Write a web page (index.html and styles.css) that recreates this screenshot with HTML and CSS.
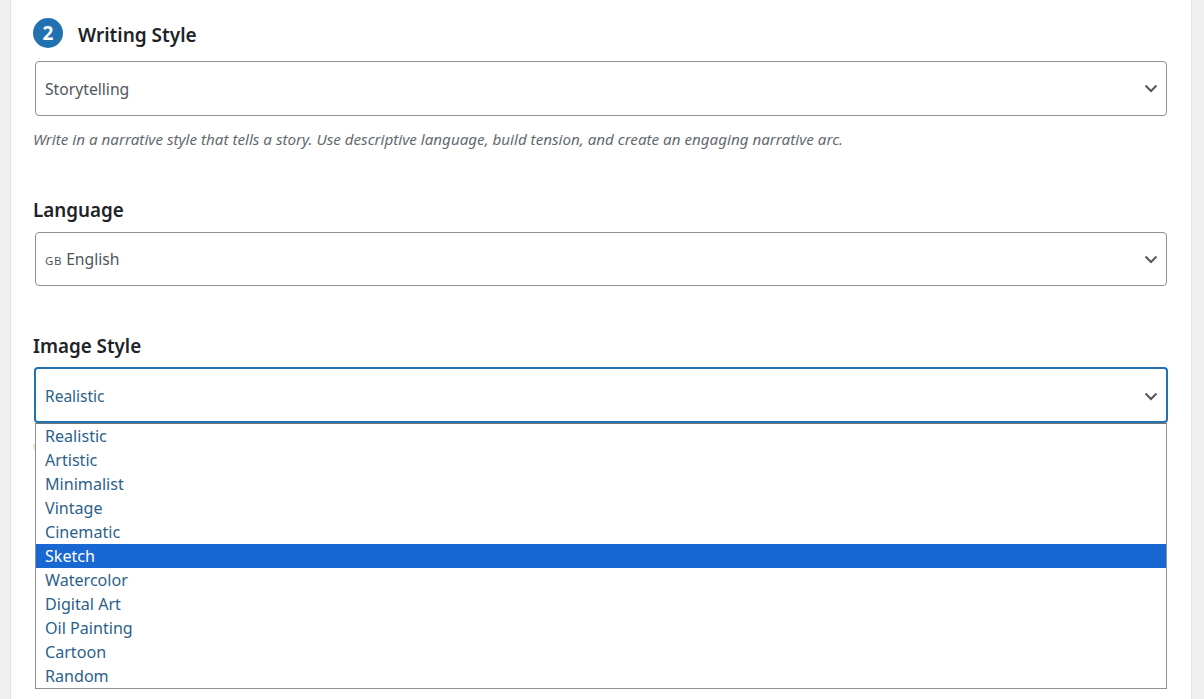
FILE: index.html
```html
<!DOCTYPE html>
<html lang="en">
<head>
<meta charset="utf-8">
<title>Writing settings</title>
<link rel="stylesheet" href="styles.css">
</head>
<body>
<main class="card">
  <section class="field field-writing">
    <h2 class="step-title"><span class="step-badge">2</span>Writing Style</h2>
    <div class="select">
      <span>Storytelling</span>
      <svg class="chevron" viewBox="0 0 14 9" aria-hidden="true"><path d="M1.5 1.5 7 7l5.5-5.5"/></svg>
    </div>
    <p class="hint">Write in a narrative style that tells a story. Use descriptive language, build tension, and create an engaging narrative arc.</p>
  </section>
  <section class="field field-language">
    <h3 class="label">Language</h3>
    <div class="select select-language">
      <span><span class="flag">GB</span> English</span>
      <svg class="chevron" viewBox="0 0 14 9" aria-hidden="true"><path d="M1.5 1.5 7 7l5.5-5.5"/></svg>
    </div>
  </section>
  <section class="field field-image">
    <h3 class="label label-image">Image Style</h3>
    <div class="select-wrap">
      <div class="select select-open">
        <span>Realistic</span>
        <svg class="chevron" viewBox="0 0 14 9" aria-hidden="true"><path d="M1.5 1.5 7 7l5.5-5.5"/></svg>
      </div>
      <ul class="menu">
        <li>Realistic</li>
        <li>Artistic</li>
        <li>Minimalist</li>
        <li>Vintage</li>
        <li>Cinematic</li>
        <li class="active">Sketch</li>
        <li>Watercolor</li>
        <li>Digital Art</li>
        <li>Oil Painting</li>
        <li>Cartoon</li>
        <li>Random</li>
      </ul>
    </div>
  </section>
</main>
</body>
</html>
```
FILE: styles.css
```css
* { box-sizing: border-box; }
html, body { height: 100%; }
body {
  margin: 0;
  background: #f0f0f1;
  font-family: "Noto Sans", "Open Sans", sans-serif;
  overflow: hidden;
}
.card {
  width: 1182px;
  height: 699px;
  margin-left: 10px;
  padding: 0 23px 0 22px;
  background: #fff;
  border-left: 1px solid #e3e3e5;
  border-right: 1px solid #e3e3e5;
}
.field-writing { padding-top: 20px; }
.field-language { padding-top: 48px; }
.field-image { padding-top: 47px; }
.step-title {
  display: flex;
  align-items: center;
  height: 28px;
  margin: 0 0 13px;
  padding-top: 2px;
  font-size: 19px;
  font-weight: 600;
  color: #1d2327;
}
.step-badge {
  display: flex;
  align-items: center;
  justify-content: center;
  width: 30px;
  height: 30px;
  margin: -5px 15px 0 0;
  border-radius: 50%;
  background: #2271b1;
  color: #fff;
  font-size: 19px;
  font-weight: 700;
}
.label {
  height: 26px;
  margin: 0 0 9px;
  font-size: 18.8px;
  line-height: 26px;
  font-weight: 600;
  color: #1d2327;
}
.label-image { margin-bottom: 8px; }
.select {
  display: flex;
  align-items: center;
  justify-content: space-between;
  width: 1132px;
  height: 55px;
  margin-left: 2px;
  padding: 0 8px 0 9px;
  border: 1px solid #8c8f94;
  border-radius: 4px;
  background: #fff;
  font-size: 15.7px;
  color: #50575e;
}
.select-language { height: 54px; }
.chevron {
  width: 14px;
  height: 9px;
  fill: none;
  stroke: #50575e;
  stroke-width: 2;
}
.flag { font-size: 11.5px; letter-spacing: .6px; }
.hint {
  margin: 13px 0 0;
  font-size: 15.18px;
  line-height: 20px;
  font-style: italic;
  color: #646970;
}
.select-wrap { position: relative; }
.select-wrap::after {
  content: "";
  position: absolute;
  top: 77px;
  left: 0;
  width: 2px;
  height: 6px;
  background: #fbe3c4;
}
.select-open {
  height: 56px;
  width: 1134px;
  margin-left: 1px;
  padding: 2px 8px 0 9px;
  border: 2px solid #2271b1;
  font-size: 15.5px;
  color: #2c5f8a;
}
.menu {
  position: absolute;
  top: 56px;
  left: 2px;
  width: 1132px;
  margin: 0;
  padding: 0;
  list-style: none;
  background: #fff;
  border: 1px solid #8c8f94;
  border-top-color: #767676;
  font-size: 16.1px;
  color: #2c5f8a;
}
.menu li {
  height: 24px;
  padding-left: 9px;
  line-height: 24px;
}
.menu .active {
  background: #1967d2;
  color: #fff;
}
```
